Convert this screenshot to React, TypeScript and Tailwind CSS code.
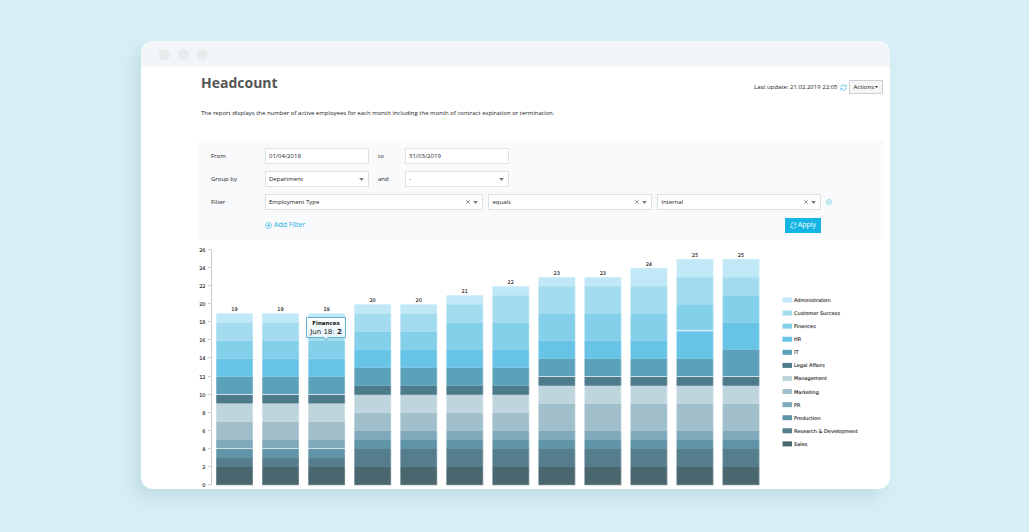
import type { ReactNode } from "react";

const SERIES = [
  { name: "Sales", color: "#4a666e" },
  { name: "Research & Development", color: "#567d8c" },
  { name: "Production", color: "#6095a8" },
  { name: "PR", color: "#80aabb" },
  { name: "Marketing", color: "#a0bfca" },
  { name: "Management", color: "#bfd5dd" },
  { name: "Legal Affairs", color: "#4e7b8c" },
  { name: "IT", color: "#5ca1ba" },
  { name: "HR", color: "#68c4e7" },
  { name: "Finances", color: "#84d0ea" },
  { name: "Customer Success", color: "#a3dcef" },
  { name: "Administration", color: "#c1e8f7" },
];

// values follow the order of SERIES, seams are the levels with a light divider
const MONTHS = [
  { month: "Apr 18", values: [2, 1, 1, 1, 2, 2, 1, 2, 2, 2, 2, 1], seams: [4, 9, 10] },
  { month: "May 18", values: [2, 1, 1, 1, 2, 2, 1, 2, 2, 2, 2, 1], seams: [4, 9, 10] },
  { month: "Jun 18", values: [2, 1, 1, 1, 2, 2, 1, 2, 2, 2, 2, 1], seams: [4, 9, 10] },
  { month: "Jul 18", values: [2, 2, 1, 1, 2, 2, 1, 2, 2, 2, 2, 1], seams: [] },
  { month: "Aug 18", values: [2, 2, 1, 1, 2, 2, 1, 2, 2, 2, 2, 1], seams: [] },
  { month: "Sep 18", values: [2, 2, 1, 1, 2, 2, 1, 2, 2, 3, 2, 1], seams: [] },
  { month: "Oct 18", values: [2, 2, 1, 1, 2, 2, 1, 2, 2, 3, 3, 1], seams: [] },
  { month: "Nov 18", values: [2, 2, 1, 1, 3, 2, 1, 2, 2, 3, 3, 1], seams: [12] },
  { month: "Dec 18", values: [2, 2, 1, 1, 3, 2, 1, 2, 2, 3, 3, 1], seams: [12] },
  { month: "Jan 19", values: [2, 2, 1, 1, 3, 2, 1, 2, 2, 3, 3, 2], seams: [12] },
  { month: "Feb 19", values: [2, 2, 1, 1, 3, 2, 1, 2, 3, 3, 3, 2], seams: [12, 17] },
  { month: "Mar 19", values: [2, 2, 1, 1, 3, 2, 1, 3, 3, 3, 2, 2], seams: [12] },
];

const TICKS = [0, 2, 4, 6, 8, 10, 12, 14, 16, 18, 20, 22, 24, 26];
const BASE = 245;
const UNIT = 9.04;
const y = (value: number) => BASE - value * UNIT;

function RefreshIcon({ className }: { className: string }) {
  return (
    <svg className={className} viewBox="0 0 16 16" fill="none" stroke="currentColor" strokeWidth="1.5" aria-hidden="true">
      <path d="M2 7.5A6 6 0 0 1 13 4.3M14.2 1.5v4.2H10M14 8.5A6 6 0 0 1 3 11.7M1.8 14.5v-4.2H6" />
    </svg>
  );
}

function PlusCircle({ className }: { className: string }) {
  return (
    <svg className={className} viewBox="0 0 16 16" fill="none" stroke="currentColor" strokeWidth="1.4" aria-hidden="true">
      <circle cx="8" cy="8" r="6.8" />
      <path d="M8 4.5v7M4.5 8h7" />
    </svg>
  );
}

function Select({ label, value, clearable, className }: { label: string; value: string; clearable?: boolean; className: string }) {
  return (
    <div className={`relative ${className}`}>
      <select
        aria-label={label}
        defaultValue={value}
        className="block h-4 w-full appearance-none border border-[#dfe1e3] bg-white px-[3px] text-[6px] leading-[14px] text-[#222]"
      >
        <option>{value}</option>
      </select>
      {clearable && (
        <button type="button" aria-label={`Clear ${label}`} className="absolute top-0 right-[13px] flex h-4 w-1 items-center justify-center text-[#666]">
          <svg className="h-1 w-1 shrink-0" viewBox="0 0 4 4" stroke="currentColor" strokeWidth="0.7">
            <path d="M0.2 0.2l3.6 3.6M3.8 0.2L0.2 3.8" />
          </svg>
        </button>
      )}
      <svg className="pointer-events-none absolute top-[7px] right-[5px] h-[3px] w-[5px]" viewBox="0 0 5 3" aria-hidden="true">
        <path d="M0.2 0h4.6L2.5 3z" fill="#777" />
      </svg>
    </div>
  );
}

function Row({ label, children }: { label: string; children?: ReactNode }) {
  return (
    <div className="flex h-4 items-center">
      <span className="w-[54px] shrink-0">{label}</span>
      {children}
    </div>
  );
}

function Chart() {
  return (
    <svg className="block w-full font-['DejaVu_Sans',sans-serif]" viewBox="0 0 685 249" role="img" aria-label="Headcount by department">
      <defs>
        <linearGradient id="tip" x1="0" y1="0" x2="0" y2="1">
          <stop offset="0" stopColor="#ffffff" />
          <stop offset="1" stopColor="#e2f2fb" />
        </linearGradient>
      </defs>

      {/* Axis */}
      <path d="M12.5 9.5V245" stroke="#c8c8c8" />
      {TICKS.map((t) => (
        <g key={t}>
          <path d={`M9 ${Math.round(y(t)) - 0.5}h3`} stroke="#d0d0d0" />
          <text x="6.5" y={y(t) + 2} fontSize="5" textAnchor="end" fill="#222" stroke="#222" strokeWidth="0.1">
            {t}
          </text>
        </g>
      ))}

      {/* Bars */}
      {MONTHS.map((m, i) => {
        const x = 17 + i * 46.04;
        const total = m.values.reduce((a, b) => a + b, 0);
        let level = 0;
        return (
          <g key={m.month}>
            {m.values.map((v, s) => {
              level += v;
              return <rect key={s} x={x} y={y(level)} width="37" height={v * UNIT + 0.2} fill={SERIES[s].color} />;
            })}
            {m.seams.map((s) => (
              <rect key={s} x={x} y={Math.round(y(s)) - 1} width="37" height="1" fill="#fff" opacity={s === 9 ? 0.35 : 0.65} />
            ))}
            <rect x={x + 0.25} y={y(total)} width="36.5" height={total * UNIT} fill="none" stroke="#fff" strokeWidth="0.8" opacity="0.35" />
            <text x={x + 18.5} y={y(total) - 2} fontSize="5" textAnchor="middle" fill="#222" stroke="#222" strokeWidth="0.1">
              {total}
            </text>
          </g>
        );
      })}

      {/* Tooltip */}
      <g>
        <path d="M107.5 77.5h39v20h-17.5l-2 3-2-3h-17.5z" fill="url(#tip)" stroke="#61b5d3" />
        <text x="127" y="85" fontSize="5.5" fontWeight="bold" textAnchor="middle" fill="#111">
          Finances
        </text>
        <text x="127" y="94" fontSize="7" textAnchor="middle" fill="#222">
          Jun 18: <tspan fontWeight="bold">2</tspan>
        </text>
      </g>

      {/* Legend */}
      {[...SERIES].reverse().map((s, i) => (
        <g key={s.name}>
          <rect x="583.5" y={57.5 + i * 13.08} width="9.5" height="5" fill={s.color} />
          <text x="595" y={62 + i * 13.08} fontSize="5" fill="#222" stroke="#222" strokeWidth="0.1">
            {s.name}
          </text>
        </g>
      ))}
    </svg>
  );
}

export default function App() {
  return (
    <div className="min-h-screen bg-[#d6eff6] pt-[41px] pr-[139px] pb-[43px] pl-[141px] font-['Open_Sans',sans-serif] text-[6px] leading-2 text-[#222]">
      <main className="overflow-hidden rounded-xl bg-white shadow-[-8px_10px_16px_#c4dee5]">
        {/* Window bar */}
        <div className="flex h-[26px] items-center gap-2 bg-[#f2f6f9] pl-[18px]">
          <span className="h-[11px] w-[11px] rounded-full bg-[#e7ebeb]" />
          <span className="h-[11px] w-[11px] rounded-full bg-[#e7ebeb]" />
          <span className="h-[11px] w-[11px] rounded-full bg-[#e7ebeb]" />
        </div>

        <div className="pr-[6px] pl-[58px]">
          <header className="flex items-center justify-between pt-1 pl-[2px]">
            <h1 className="text-[14px] leading-6 font-bold text-[#555]">Headcount</h1>
            <div className="flex items-center gap-[2px] pt-2 pr-px">
              <span>Last update: 21.02.2019 22:05</span>
              <button type="button" aria-label="Refresh" className="text-[#35b6e0]">
                <RefreshIcon className="h-[7px] w-[7px]" />
              </button>
              <button type="button" className="flex h-[14px] items-center gap-px border border-[#d0d0d0] bg-[#f5f5f5] px-1">
                Actions
                <svg className="h-[2px] w-[3px]" viewBox="0 0 3 2" aria-hidden="true">
                  <path d="M0 0h3L1.5 2z" fill="#333" />
                </svg>
              </button>
            </div>
          </header>

          <p className="mt-[14px] pl-[2px]">
            The report displays the number of active employees for each month including the month of contract expiration or termination.
          </p>

          <form className="mt-6 flex flex-col gap-[7px] bg-[#f9fafc] py-[7px] pr-[63px] pl-3" onSubmit={(e) => e.preventDefault()}>
            <Row label="From">
              <input aria-label="From" defaultValue="01/04/2018" className="h-4 w-[104px] border border-[#dfe1e3] bg-white px-[3px]" />
              <span className="w-9 pl-[9px]">to</span>
              <input aria-label="To" defaultValue="31/03/2019" className="h-4 w-[104px] border border-[#dfe1e3] bg-white px-[3px]" />
            </Row>
            <Row label="Group by">
              <Select label="Group by" value="Department" className="w-[104px]" />
              <span className="w-9 pl-[9px]">and</span>
              <Select label="Then by" value="-" className="w-[104px]" />
            </Row>
            <Row label="Filter">
              <div className="relative flex grow gap-[5px]">
                <Select label="Filter field" value="Employment Type" clearable className="grow-[4] basis-0" />
                <Select label="Filter operator" value="equals" clearable className="grow-[3] basis-0" />
                <Select label="Filter value" value="Internal" clearable className="grow-[3] basis-0" />
                <button type="button" aria-label="Remove filter" className="absolute top-[5px] -right-[11px] text-[#5cc3e6]">
                  <svg className="h-[6px] w-[6px]" viewBox="0 0 16 16" fill="none" stroke="currentColor" strokeWidth="1.6">
                    <circle cx="8" cy="8" r="6.8" />
                    <path d="M5.5 5.5l5 5M10.5 5.5l-5 5" />
                  </svg>
                </button>
              </div>
            </Row>
            <Row label="">
              <div className="flex grow items-center justify-between">
                <button type="button" className="flex items-center gap-[2px] text-[7px] font-medium text-[#17b1e2]">
                  <PlusCircle className="h-[7px] w-[7px]" />
                  Add Filter
                </button>
                <button type="submit" className="flex h-[15px] items-center gap-px bg-[#12b5e3] px-[5px] text-[7px] font-medium text-white">
                  <RefreshIcon className="h-[7px] w-[7px]" />
                  Apply
                </button>
              </div>
            </Row>
          </form>

          <Chart />
        </div>
      </main>
    </div>
  );
}
